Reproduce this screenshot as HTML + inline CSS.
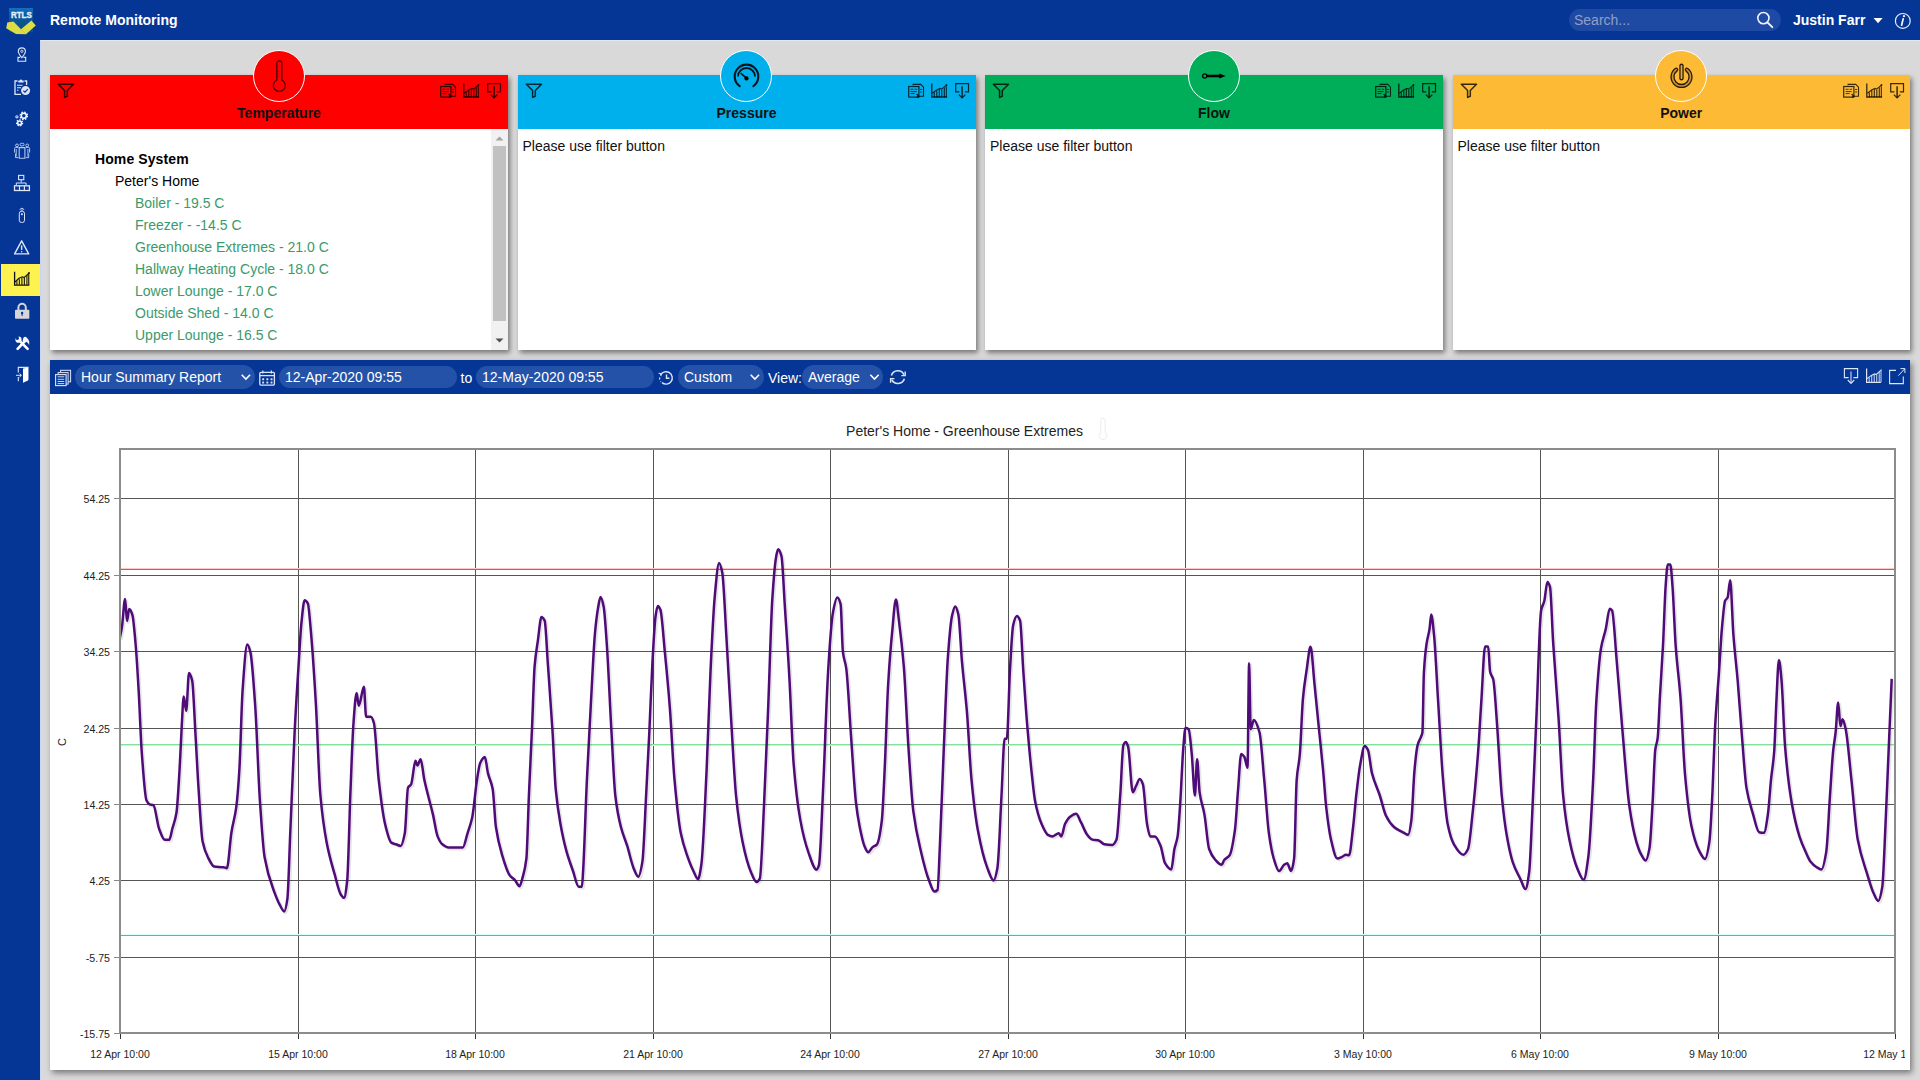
<!DOCTYPE html>
<html><head><meta charset="utf-8">
<style>
*{box-sizing:border-box;margin:0;padding:0}
html,body{width:1920px;height:1080px;overflow:hidden}
body{background:#d9d9d9;font-family:"Liberation Sans",sans-serif;font-size:14px;color:#000;position:relative}
.abs{position:absolute}
svg{overflow:visible}
#top{left:0;top:0;width:1920px;height:40px;background:#063695}
#side{left:0;top:0;width:40px;height:1080px;background:#063695}
#sideline{left:40px;top:40px;width:1px;height:1040px;background:#c9d6f2}
#topline{left:40px;top:40px;width:1880px;height:1px;background:#dfe6f4}
.title{left:50px;top:12px;color:#fff;font-weight:bold;font-size:14px;line-height:16px}
.search{left:1569px;top:9px;width:212px;height:22px;border-radius:11px;background:#1f4aa3}
.search span{position:absolute;left:5px;top:3px;color:#919fc6;font-size:14px;line-height:16px}
.user{left:1793px;top:12px;color:#fff;font-weight:bold;font-size:14px;line-height:16px}
.panel{top:75px;width:458px;height:275px;background:#fff;box-shadow:2px 3px 5px rgba(0,0,0,.45)}
.phead{position:absolute;left:0;top:0;width:100%;height:54px}
.pcirc{position:absolute;left:202.5px;top:-25px;width:52px;height:52px;border-radius:50%;border:1px solid #fff}
.ptitle{position:absolute;left:0;width:100%;top:30px;text-align:center;font-weight:bold;font-size:14px;line-height:16px;color:#111}
.pmsg{position:absolute;left:5px;top:63px;font-size:14px;line-height:16px;color:#111}
.hsvg{position:absolute;left:0;top:0}
.tree{position:absolute;left:0;top:54px;width:441px;height:221px}
.tree div{position:absolute;font-size:14px;line-height:16px;white-space:nowrap}
.tree .g{color:#3b9a6b}
.sb{position:absolute;left:441px;top:54px;width:17px;height:221px;background:#f1f1f1}
.sbt{position:absolute;left:2px;top:17px;width:13px;height:175px;background:#c1c1c1}
#chart{left:50px;top:360px;width:1860px;height:710px;background:#fff;box-shadow:2px 3px 6px rgba(0,0,0,.45)}
#tbar{position:absolute;left:0;top:0;width:1860px;height:34px;background:#063695}
.pill{position:absolute;top:6px;height:22px;border-radius:11px;background:#2352a8;color:#fff;font-size:14px;line-height:22px;padding-left:6px;white-space:nowrap}
.sel{top:5px;height:24px;line-height:24px;border-radius:12px}
.tl{position:absolute;top:10px;color:#fff;font-size:14px;line-height:16px;white-space:nowrap}
</style></head><body>
<div class="abs" id="top"></div>
<div class="abs" id="side"></div>
<div class="abs" id="sideline"></div>
<div class="abs" id="topline"></div>
<div class="abs" style="left:1px;top:264px;width:39px;height:32px;background:#fdf24f"></div>
<div class="abs title">Remote Monitoring</div>
<div class="abs search"><span>Search...</span></div>
<div class="abs user">Justin Farr</div>
<svg class="abs" style="left:0;top:0" width="1920" height="40">
<defs><linearGradient id="lg" x1="0" y1="0" x2="0" y2="1"><stop offset="0" stop-color="#1570bf"/><stop offset="0.3" stop-color="#0a5a9c"/><stop offset="1" stop-color="#0b4d82"/></linearGradient></defs>
<rect x="9" y="8" width="24" height="24.3" fill="url(#lg)"/>
<text x="10.9" y="17.8" font-family="Liberation Sans" font-weight="bold" font-size="9.6" fill="#e4f2ff" stroke="#e4f2ff" stroke-width="0.35" textLength="21" lengthAdjust="spacingAndGlyphs">RTLS</text>
<path d="M7.3 22.4 L13.4 21.6 L21 29.2 L31.4 20.4 L35.8 25.4 L26 34.2 L16 33.9 L6.2 28.2Z" fill="#dedc45"/>
<path d="M21 29.2 L26 34.2" stroke="#b9b630" stroke-width="0.8" opacity="0.6"/>
<circle cx="1763.4" cy="18.1" r="5.6" fill="none" stroke="#f0f4ff" stroke-width="1.6"/>
<path d="M1767.4 22.3 L1772.3 27.2" stroke="#f0f4ff" stroke-width="1.9" stroke-linecap="round"/>
<path d="M1873.5 18 H1882.6 L1878.05 23.3Z" fill="#fff"/>
<circle cx="1902.8" cy="20.9" r="7.4" fill="none" stroke="#e8eeff" stroke-width="1.2"/>
<circle cx="1904" cy="16.2" r="1.1" fill="#f4f7ff"/>
<path d="M1903.2 18.8 L1901.6 25.2" stroke="#f4f7ff" stroke-width="1.7" stroke-linecap="round"/>
</svg>
<svg class="abs" style="left:0;top:40" width="40" height="360" viewBox="0 40 40 360">
<path d="M21.85 57.6 C19.6 54.8 18.3 53 18.3 51.4 A3.55 3.55 0 0 1 25.4 51.4 C25.4 53 24.1 54.8 21.85 57.6Z" stroke="#dce6f8" fill="none" stroke-width="1.1"/>
<circle cx="21.85" cy="51.3" r="1.15" stroke="#dce6f8" fill="none" stroke-width="0.9"/>
<path d="M20.2 57.4 H18 V61.2 H25.7 V57.4 H23.5" stroke="#dce6f8" fill="none" stroke-width="1.1"/>
<path d="M17.5 81 H15 V94.3 H21" stroke="#dce6f8" fill="none" stroke-width="1.3"/>
<path d="M24.5 81 H26.6 V85" stroke="#dce6f8" fill="none" stroke-width="1.3"/>
<path d="M18.3 82.5 V80.6 H19.8 A1.2 1.2 0 0 1 22.2 80.6 H23.7 V82.5Z" fill="#dce6f8"/>
<path d="M17 85.3 H22.5 M17 87.8 H21 M17 90.3 H18.5" stroke="#dce6f8" stroke-width="1.1"/>
<circle cx="25.6" cy="90.6" r="4.5" fill="#dce6f8"/>
<path d="M23.4 90.7 L25 92.2 L27.8 89.2" stroke="#063695" stroke-width="1.2" fill="none"/>
<circle cx="23.8" cy="115.8" r="3.7" fill="none" stroke="#f4f7ff" stroke-width="1.3" stroke-dasharray="1.6 1.3"/>
<circle cx="23.8" cy="115.8" r="2.5" fill="none" stroke="#f4f7ff" stroke-width="1.5"/>
<circle cx="19.6" cy="122.9" r="3.05" fill="none" stroke="#f4f7ff" stroke-width="1.2" stroke-dasharray="1.4 1.34"/>
<circle cx="19.6" cy="122.9" r="1.9" fill="none" stroke="#f4f7ff" stroke-width="1.5"/>
<circle cx="16.9" cy="116.8" r="1.1" fill="none" stroke="#c8d8f8" stroke-width="1.1"/>
<rect x="20.1" y="143.3" width="3.9" height="2.6" rx="1.2" stroke="#b4c8f2" fill="none" stroke-width="1"/>
<path d="M19.2 147.6 H24.9 V158.3 H19.2Z" stroke="#b4c8f2" fill="none" stroke-width="1.1"/>
<circle cx="17" cy="145.4" r="1.4" stroke="#b4c8f2" fill="none" stroke-width="1"/>
<path d="M18.3 147.4 H15.6 Q14.6 147.4 14.6 148.5 V152.6 M15.5 153.5 V157.6 H18.3" stroke="#b4c8f2" fill="none" stroke-width="1"/><path d="M16.3 149 V156.5" stroke="#8ea8dc" stroke-width="1.2"/>
<circle cx="27.2" cy="145.4" r="1.4" stroke="#b4c8f2" fill="none" stroke-width="1"/>
<path d="M25.9 147.4 H28.6 Q29.6 147.4 29.6 148.5 V152.6 M28.7 153.5 V157.6 H25.9" stroke="#b4c8f2" fill="none" stroke-width="1"/><path d="M27.9 149 V156.5" stroke="#8ea8dc" stroke-width="1.2"/>
<rect x="18.6" y="175.4" width="5.2" height="4.3" stroke="#dce6f8" fill="none" stroke-width="1.1"/>
<path d="M21.2 179.7 V182.5 M16.3 185.3 V183 H26.1 V185.3" stroke="#dce6f8" fill="none" stroke-width="1"/>
<rect x="14.5" y="185.8" width="14.9" height="4.7" stroke="#dce6f8" fill="none" stroke-width="1.3"/>
<path d="M19.5 185.8 V190.5 M24.4 185.8 V190.5" stroke="#dce6f8" fill="none" stroke-width="1.2"/>
<path d="M19.6 209.6 Q21.9 206.8 24.2 209.6 M20.8 210.4 Q21.9 209.4 23 210.4" stroke="#dce6f8" fill="none" stroke-width="0.9"/>
<rect x="19.3" y="211.4" width="5.2" height="11" rx="2" stroke="#dce6f8" fill="none" stroke-width="1"/>
<rect x="21" y="213.3" width="1.8" height="1.8" fill="#dce6f8"/>
<path d="M21.65 240.8 L28.7 253.9 H14.6Z" stroke="#dce6f8" fill="none" stroke-width="1.4" stroke-linejoin="round"/>
<path d="M21.65 245.4 V250" stroke="#dce6f8" stroke-width="1.4"/><circle cx="21.65" cy="251.7" r="0.8" fill="#dce6f8"/>
<path d="M14.6 271.8 V285.1 H29.3" stroke="#111" stroke-width="1.3" fill="none"/>
<path d="M15 282 L19 278.3 L22.4 276.8 L24 277.6 L29 273.2" stroke="#111" stroke-width="1.2" fill="none"/><circle cx="29" cy="273" r="0.9" fill="#111"/>
<path d="M16.9 285 V281.2 M19.4 285 V279.2 M21.9 285 V277.6 M24.4 285 V277.2 M26.9 285 V275.2 M28.7 285 V273.8" stroke="#2a2a10" stroke-width="1.2"/>
<path d="M18.4 310 V307.5 A3.7 3.7 0 0 1 25.8 307.5 V310" stroke="#d4d6dc" stroke-width="2" fill="none"/>
<rect x="15" y="309.8" width="14.3" height="8.9" rx="0.8" fill="#d4d6dc"/>
<circle cx="22.1" cy="313" r="1.2" fill="#063695"/><path d="M22.1 313 V316" stroke="#063695" stroke-width="1"/>
<path d="M17.6 348.8 L24.2 341.8" stroke="#fff" stroke-width="2.6" stroke-linecap="round"/>
<path d="M27.6 348.8 L21.2 342.4" stroke="#fff" stroke-width="2.6" stroke-linecap="round"/>
<circle cx="18.5" cy="339.7" r="3.1" fill="#f2f6ff"/><circle cx="17.3" cy="338.2" r="1.7" fill="#063695"/><path d="M17.3 338.2 L14.8 335.6 L16.2 335 L18.8 336.2Z" fill="#063695"/>
<path d="M23.2 338.3 Q24.6 336 26.6 337.4 L28.4 339.5 Q29.8 341.7 29.1 345 Q27.9 342.3 26.3 341.8 L24.6 343.2 L22.6 341Z" fill="#f2f6ff"/>
<path d="M18.3 372.5 V367.4 H28 V380" stroke="#dce6f8" fill="none" stroke-width="1.1"/>
<path d="M18.3 377 V381.3" stroke="#dce6f8" fill="none" stroke-width="1.1"/>
<path d="M23 368.5 L28 367.4 V380.5 L23 382.7Z" fill="#fff"/>
<path d="M16 375.3 H21.2 M19.6 373.6 L21.4 375.3 L19.6 377" stroke="#dce6f8" stroke-width="1" fill="none"/>
</svg>

<!-- panels -->
<div class="abs panel" style="left:50px">
  <div class="phead" style="background:#fe0000"><div class="pcirc" style="background:#fe0000"></div><div class="ptitle">Temperature</div></div>
  <svg class="hsvg" width="458" height="54" viewBox="0 0 458 54">
<path d="M8.3 9.3 H23.5 L17.3 15.5 V21.3 L14.6 22.4 V15.5 Z" fill="none" stroke="rgba(0,0,0,0.78)" stroke-width="1.5" stroke-linejoin="round"/>
<g transform="translate(-0.9 0)">
<path d="M396 10.3 V9.4 H403.6 L406.4 12.2 V21.3 H401.5" fill="none" stroke="rgba(0,0,0,0.78)" stroke-width="1.1"/>
<rect x="391.6" y="11.5" width="10.2" height="10.6" fill="none" stroke="rgba(0,0,0,0.78)" stroke-width="1.2"/>
<path d="M393.5 14.3 H396.5 M397.5 14.3 H400 M393.5 16.6 H399.5 M393.5 18.6 H397.5 M403 14.5 H405 M403 17 H405" stroke="rgba(0,0,0,0.78)" stroke-width="0.9"/>
<path d="M399.5 19 L402 21.6 M401.5 21 L400 22.5" stroke="rgba(0,0,0,0.78)" stroke-width="1.3"/>
<path d="M414.7 8.6 V22 H430" fill="none" stroke="rgba(0,0,0,0.78)" stroke-width="1.3"/>
<path d="M415.3 18.3 L419.5 15 L423 13.4 L424.5 14.2 L429.3 10.2" fill="none" stroke="rgba(0,0,0,0.78)" stroke-width="1.1"/><circle cx="429.4" cy="10" r="0.9" fill="rgba(0,0,0,0.78)"/>
<path d="M417.2 22 V17.4 M419.7 22 V15.4 M422.2 22 V14.2 M424.7 22 V14.8 M427.2 22 V12.6 M429.2 22 V11.2" stroke="rgba(0,0,0,0.78)" stroke-width="1.1"/>
<path d="M442.3 16.8 H438.6 V8.6 H451.4 V16.8 H447.7" fill="none" stroke="rgba(0,0,0,0.78)" stroke-width="1.2"/>
<path d="M445 11.3 V22.6" stroke="rgba(0,0,0,0.78)" stroke-width="1.5"/><path d="M441.8 19.6 L445 22.9 L448.2 19.6" fill="none" stroke="rgba(0,0,0,0.78)" stroke-width="1.3"/>
</g>
<path d="M226.8 5 V-11.7 A2.5 2.5 0 0 1 231.8 -11.7 V5 A6 6 0 1 1 226.8 5 Z" fill="none" stroke="rgba(0,0,0,0.7)" stroke-width="1.3"/>
<path d="M227 -1 H228.5 M227 1.5 H228.5 M227 -3.5 H228.5" stroke="rgba(0,0,0,0.5)" stroke-width="0.6"/>
</svg>
  <div class="tree">
    <div style="left:45px;top:22px;font-weight:bold;letter-spacing:0.1px">Home System</div>
    <div style="left:65px;top:44px">Peter's Home</div>
    <div class="g" style="left:85px;top:66px">Boiler - 19.5 C</div>
    <div class="g" style="left:85px;top:88px">Freezer - -14.5 C</div>
    <div class="g" style="left:85px;top:110px">Greenhouse Extremes - 21.0 C</div>
    <div class="g" style="left:85px;top:132px">Hallway Heating Cycle - 18.0 C</div>
    <div class="g" style="left:85px;top:154px">Lower Lounge - 17.0 C</div>
    <div class="g" style="left:85px;top:176px">Outside Shed - 14.0 C</div>
    <div class="g" style="left:85px;top:198px">Upper Lounge - 16.5 C</div>
  </div>
  <div class="sb"><div class="sbt"></div>
    <svg class="abs" style="left:0;top:0" width="17" height="221"><path d="M4.5 11.5 L8.5 7.5 L12.5 11.5Z" fill="#a3a3a3"/><path d="M4.5 209.5 L8.5 213.5 L12.5 209.5Z" fill="#505050"/></svg>
  </div>
</div>
<div class="abs panel" style="left:517.5px">
  <div class="phead" style="background:#00b0ec"><div class="pcirc" style="background:#00b0ec"></div><div class="ptitle">Pressure</div></div>
  <svg class="hsvg" width="458" height="54" viewBox="0 0 458 54">
<path d="M8.3 9.3 H23.5 L17.3 15.5 V21.3 L14.6 22.4 V15.5 Z" fill="none" stroke="rgba(0,0,0,0.78)" stroke-width="1.5" stroke-linejoin="round"/>
<g transform="translate(-0.9 0)">
<path d="M396 10.3 V9.4 H403.6 L406.4 12.2 V21.3 H401.5" fill="none" stroke="rgba(0,0,0,0.78)" stroke-width="1.1"/>
<rect x="391.6" y="11.5" width="10.2" height="10.6" fill="none" stroke="rgba(0,0,0,0.78)" stroke-width="1.2"/>
<path d="M393.5 14.3 H396.5 M397.5 14.3 H400 M393.5 16.6 H399.5 M393.5 18.6 H397.5 M403 14.5 H405 M403 17 H405" stroke="rgba(0,0,0,0.78)" stroke-width="0.9"/>
<path d="M399.5 19 L402 21.6 M401.5 21 L400 22.5" stroke="rgba(0,0,0,0.78)" stroke-width="1.3"/>
<path d="M414.7 8.6 V22 H430" fill="none" stroke="rgba(0,0,0,0.78)" stroke-width="1.3"/>
<path d="M415.3 18.3 L419.5 15 L423 13.4 L424.5 14.2 L429.3 10.2" fill="none" stroke="rgba(0,0,0,0.78)" stroke-width="1.1"/><circle cx="429.4" cy="10" r="0.9" fill="rgba(0,0,0,0.78)"/>
<path d="M417.2 22 V17.4 M419.7 22 V15.4 M422.2 22 V14.2 M424.7 22 V14.8 M427.2 22 V12.6 M429.2 22 V11.2" stroke="rgba(0,0,0,0.78)" stroke-width="1.1"/>
<path d="M442.3 16.8 H438.6 V8.6 H451.4 V16.8 H447.7" fill="none" stroke="rgba(0,0,0,0.78)" stroke-width="1.2"/>
<path d="M445 11.3 V22.6" stroke="rgba(0,0,0,0.78)" stroke-width="1.5"/><path d="M441.8 19.6 L445 22.9 L448.2 19.6" fill="none" stroke="rgba(0,0,0,0.78)" stroke-width="1.3"/>
</g>
<path d="M221.7 11.1 A11.8 11.8 0 1 1 235.3 11.1" fill="none" stroke="#03141c" stroke-width="2.1" stroke-linecap="round"/>
<path d="M220 1.5 A8.5 8.5 0 0 1 237 1.5" fill="none" stroke="#03141c" stroke-width="1.8"/>
<path d="M223.2 -1.4 L228.5 3.2" stroke="#03141c" stroke-width="1.6" stroke-linecap="round"/><circle cx="228.5" cy="3.4" r="2.1" fill="#000"/>
</svg>
  <div class="pmsg">Please use filter button</div>
</div>
<div class="abs panel" style="left:985px">
  <div class="phead" style="background:#00ae5a"><div class="pcirc" style="background:#00ae5a"></div><div class="ptitle">Flow</div></div>
  <svg class="hsvg" width="458" height="54" viewBox="0 0 458 54">
<path d="M8.3 9.3 H23.5 L17.3 15.5 V21.3 L14.6 22.4 V15.5 Z" fill="none" stroke="rgba(0,0,0,0.78)" stroke-width="1.5" stroke-linejoin="round"/>
<g transform="translate(-0.9 0)">
<path d="M396 10.3 V9.4 H403.6 L406.4 12.2 V21.3 H401.5" fill="none" stroke="rgba(0,0,0,0.78)" stroke-width="1.1"/>
<rect x="391.6" y="11.5" width="10.2" height="10.6" fill="none" stroke="rgba(0,0,0,0.78)" stroke-width="1.2"/>
<path d="M393.5 14.3 H396.5 M397.5 14.3 H400 M393.5 16.6 H399.5 M393.5 18.6 H397.5 M403 14.5 H405 M403 17 H405" stroke="rgba(0,0,0,0.78)" stroke-width="0.9"/>
<path d="M399.5 19 L402 21.6 M401.5 21 L400 22.5" stroke="rgba(0,0,0,0.78)" stroke-width="1.3"/>
<path d="M414.7 8.6 V22 H430" fill="none" stroke="rgba(0,0,0,0.78)" stroke-width="1.3"/>
<path d="M415.3 18.3 L419.5 15 L423 13.4 L424.5 14.2 L429.3 10.2" fill="none" stroke="rgba(0,0,0,0.78)" stroke-width="1.1"/><circle cx="429.4" cy="10" r="0.9" fill="rgba(0,0,0,0.78)"/>
<path d="M417.2 22 V17.4 M419.7 22 V15.4 M422.2 22 V14.2 M424.7 22 V14.8 M427.2 22 V12.6 M429.2 22 V11.2" stroke="rgba(0,0,0,0.78)" stroke-width="1.1"/>
<path d="M442.3 16.8 H438.6 V8.6 H451.4 V16.8 H447.7" fill="none" stroke="rgba(0,0,0,0.78)" stroke-width="1.2"/>
<path d="M445 11.3 V22.6" stroke="rgba(0,0,0,0.78)" stroke-width="1.5"/><path d="M441.8 19.6 L445 22.9 L448.2 19.6" fill="none" stroke="rgba(0,0,0,0.78)" stroke-width="1.3"/>
</g>
<circle cx="219.7" cy="1" r="2.1" fill="none" stroke="#000" stroke-width="1.3"/>
<path d="M221.8 1 H235" stroke="#000" stroke-width="2.6"/>
<path d="M234.3 -1.6 L240.7 1 L234.3 3.6Z" fill="#000"/>
</svg>
  <div class="pmsg">Please use filter button</div>
</div>
<div class="abs panel" style="left:1452.5px;width:457.5px">
  <div class="phead" style="background:#fdbb35"><div class="pcirc" style="background:#fdbb35"></div><div class="ptitle">Power</div></div>
  <svg class="hsvg" width="458" height="54" viewBox="0 0 458 54">
<path d="M8.3 9.3 H23.5 L17.3 15.5 V21.3 L14.6 22.4 V15.5 Z" fill="none" stroke="rgba(0,0,0,0.78)" stroke-width="1.5" stroke-linejoin="round"/>
<g transform="translate(-0.9 0)">
<path d="M396 10.3 V9.4 H403.6 L406.4 12.2 V21.3 H401.5" fill="none" stroke="rgba(0,0,0,0.78)" stroke-width="1.1"/>
<rect x="391.6" y="11.5" width="10.2" height="10.6" fill="none" stroke="rgba(0,0,0,0.78)" stroke-width="1.2"/>
<path d="M393.5 14.3 H396.5 M397.5 14.3 H400 M393.5 16.6 H399.5 M393.5 18.6 H397.5 M403 14.5 H405 M403 17 H405" stroke="rgba(0,0,0,0.78)" stroke-width="0.9"/>
<path d="M399.5 19 L402 21.6 M401.5 21 L400 22.5" stroke="rgba(0,0,0,0.78)" stroke-width="1.3"/>
<path d="M414.7 8.6 V22 H430" fill="none" stroke="rgba(0,0,0,0.78)" stroke-width="1.3"/>
<path d="M415.3 18.3 L419.5 15 L423 13.4 L424.5 14.2 L429.3 10.2" fill="none" stroke="rgba(0,0,0,0.78)" stroke-width="1.1"/><circle cx="429.4" cy="10" r="0.9" fill="rgba(0,0,0,0.78)"/>
<path d="M417.2 22 V17.4 M419.7 22 V15.4 M422.2 22 V14.2 M424.7 22 V14.8 M427.2 22 V12.6 M429.2 22 V11.2" stroke="rgba(0,0,0,0.78)" stroke-width="1.1"/>
<path d="M442.3 16.8 H438.6 V8.6 H451.4 V16.8 H447.7" fill="none" stroke="rgba(0,0,0,0.78)" stroke-width="1.2"/>
<path d="M445 11.3 V22.6" stroke="rgba(0,0,0,0.78)" stroke-width="1.5"/><path d="M441.8 19.6 L445 22.9 L448.2 19.6" fill="none" stroke="rgba(0,0,0,0.78)" stroke-width="1.3"/>
</g>
<path d="M223.2 -5.3 A9 9 0 1 0 233.8 -5.3" fill="none" stroke="#2a1a08" stroke-width="4.2" stroke-linecap="round"/>
<path d="M223.2 -5.3 A9 9 0 1 0 233.8 -5.3" fill="none" stroke="#c8943a" stroke-width="1.6" stroke-linecap="round"/>
<path d="M228.5 -9.2 V3.2" stroke="#2a1a08" stroke-width="4.4" stroke-linecap="round"/>
<path d="M228.5 -9.2 V3.2" stroke="#e6aa3a" stroke-width="1.8" stroke-linecap="round"/>
</svg>
  <div class="pmsg">Please use filter button</div>
</div>

<!-- chart -->
<div class="abs" style="left:50px;top:359px;width:1860px;height:1px;background:#cfdaf2"></div>
<div class="abs" id="chart">
  <div id="tbar">
    <div class="pill sel" style="left:25px;width:180px">Hour Summary Report</div>
    <div class="pill" style="left:229px;width:178px">12-Apr-2020 09:55</div>
    <div class="tl" style="left:410.5px">to</div>
    <div class="pill" style="left:426px;width:178px">12-May-2020 09:55</div>
    <div class="pill sel" style="left:628px;width:86px">Custom</div>
    <div class="tl" style="left:718px">View:</div>
    <div class="pill sel" style="left:752px;width:81px">Average</div>
    <svg class="abs" style="left:0;top:0" width="1860" height="34" viewBox="0 0 1860 34">
<rect x="10.6" y="10.3" width="10" height="11.5" fill="none" stroke="#dce6f8" stroke-width="1"/>
<rect x="8.1" y="12.6" width="10" height="11.5" fill="#063695" stroke="#dce6f8" stroke-width="1"/>
<rect x="5.6" y="14.6" width="10.5" height="11" fill="#063695" stroke="#dce6f8" stroke-width="1.1"/>
<path d="M7.6 16.8 H14.2 M7.6 19.3 H14.2 M7.6 21.5 H14.2 M7.6 23.6 H14.2" stroke="#dce6f8" stroke-width="0.9"/>
<path d="M191.70000000000002 14.8 L195.9 19 L200.1 14.8" fill="none" stroke="#fff" stroke-width="1.6"/>
<path d="M700.6999999999999 14.8 L704.9 19 L709.1 14.8" fill="none" stroke="#fff" stroke-width="1.6"/>
<path d="M820.3 14.8 L824.5 19 L828.7 14.8" fill="none" stroke="#fff" stroke-width="1.6"/>
<rect x="209.8" y="12.3" width="14.6" height="12.8" rx="1" fill="none" stroke="#dce6f8" stroke-width="1.3"/>
<path d="M209.8 15.6 H224.4" stroke="#dce6f8" stroke-width="1.3"/><path d="M212.8 10.6 V13.4 M221.4 10.6 V13.4" stroke="#dce6f8" stroke-width="1.2"/>
<rect x="212.2" y="18.3" width="1.9" height="1.9" fill="#dce6f8"/>
<rect x="216.4" y="18.3" width="1.9" height="1.9" fill="#dce6f8"/>
<rect x="220.6" y="18.3" width="1.9" height="1.9" fill="#dce6f8"/>
<rect x="212.2" y="21.6" width="1.9" height="1.9" fill="#dce6f8"/>
<rect x="216.4" y="21.6" width="1.9" height="1.9" fill="#dce6f8"/>
<rect x="220.6" y="21.6" width="1.9" height="1.9" fill="#dce6f8"/>
<path d="M610.6 15 A6.2 6.2 0 1 1 612 22.6" fill="none" stroke="#dce6f8" stroke-width="1.4"/>
<path d="M609.6 17.6 V19.5 M610.6 21.4 L611 21.9" stroke="#dce6f8" stroke-width="1.2"/>
<path d="M616.5 14.5 V18.3 H619.4" fill="none" stroke="#dce6f8" stroke-width="1.4"/>
<path d="M608.6 13.2 L611.2 13.6 L610.8 16.2" fill="none" stroke="#dce6f8" stroke-width="1.1"/>
<path d="M841.4 15.4 A6.8 6.8 0 0 1 854 14.6" fill="none" stroke="#dce6f8" stroke-width="1.6"/>
<path d="M854.4 18.8 A6.8 6.8 0 0 1 841.8 19.6" fill="none" stroke="#dce6f8" stroke-width="1.6"/>
<path d="M855.2 11.4 V15.6 H851.4" fill="none" stroke="#dce6f8" stroke-width="1.4"/>
<path d="M840.6 22.8 V18.6 H844.4" fill="none" stroke="#dce6f8" stroke-width="1.4"/>
<path d="M1798.6 17.6 H1794.4 V8.6 H1807.6 V17.6 H1803.4" fill="none" stroke="#dce6f8" stroke-width="1.1"/>
<path d="M1801 11.5 V23" stroke="#8fa8dc" stroke-width="1.6"/><path d="M1797.8 20 L1801 23.4 L1804.2 20" fill="none" stroke="#dce6f8" stroke-width="1.1"/>
<path d="M1816.6 8.6 V22.3 H1830.9" fill="none" stroke="#dce6f8" stroke-width="1.2"/>
<path d="M1817 18.6 L1821.4 15.4 L1824.6 13.9 L1826 14.6 L1831.6 9.6" fill="none" stroke="#dce6f8" stroke-width="1.1"/>
<path d="M1819.2 22.3 V17.4 M1821.7 22.3 V15.8 M1824.2 22.3 V14.4 M1826.7 22.3 V14.2 M1829.2 22.3 V11.8 M1831 22.3 V10.4" stroke="#b8caf0" stroke-width="1.1"/>
<path d="M1846 10.4 H1839.6 V23.6 H1853.3 V16.6" fill="none" stroke="#dce6f8" stroke-width="1.1"/>
<path d="M1848.4 15.6 L1854.7 8.9 M1850.5 8.6 H1854.9 V13" fill="none" stroke="#dce6f8" stroke-width="1"/>
</svg>
  </div>
</div>
<svg class="abs" style="left:0;top:0" width="1920" height="1080" viewBox="0 0 1920 1080">
<defs><clipPath id="cp"><rect x="121" y="450" width="1773" height="582"/></clipPath><clipPath id="xc"><rect x="0" y="1040" width="1905" height="30"/></clipPath></defs>
<text x="964.5" y="435.7" text-anchor="middle" font-family="Liberation Sans" font-size="14" fill="#222">Peter's Home - Greenhouse Extremes</text>
<path d="M1100.8 420.5 a2.2 2.2 0 0 1 4.4 0 v12 a3.8 3.8 0 1 1 -4.4 0z" fill="none" stroke="#ececec" stroke-width="1"/>
<text x="0" y="0" transform="translate(65.5 742) rotate(-90)" text-anchor="middle" font-family="Liberation Sans" font-size="11" fill="#222">C</text>
<rect x="121" y="498" width="1773" height="1" fill="#555"/>
<rect x="121" y="575" width="1773" height="1" fill="#555"/>
<rect x="121" y="651" width="1773" height="1" fill="#555"/>
<rect x="121" y="728" width="1773" height="1" fill="#555"/>
<rect x="121" y="804" width="1773" height="1" fill="#555"/>
<rect x="121" y="880" width="1773" height="1" fill="#555"/>
<rect x="121" y="957" width="1773" height="1" fill="#555"/>
<rect x="298" y="450" width="1" height="582" fill="#555"/>
<rect x="475" y="450" width="1" height="582" fill="#555"/>
<rect x="653" y="450" width="1" height="582" fill="#555"/>
<rect x="830" y="450" width="1" height="582" fill="#555"/>
<rect x="1008" y="450" width="1" height="582" fill="#555"/>
<rect x="1185" y="450" width="1" height="582" fill="#555"/>
<rect x="1363" y="450" width="1" height="582" fill="#555"/>
<rect x="1540" y="450" width="1" height="582" fill="#555"/>
<rect x="1718" y="450" width="1" height="582" fill="#555"/>
<rect x="121" y="568" width="1773" height="1" fill="#ffc6c6"/><rect x="121" y="569" width="1773" height="1" fill="#c05e60"/>
<rect x="121" y="744" width="1773" height="1" fill="#82e19c"/><rect x="121" y="745" width="1773" height="1" fill="#b6ffc8"/>
<rect x="121" y="934" width="1773" height="1" fill="#dcffff"/><rect x="121" y="935" width="1773" height="1" fill="#6aa9ba"/>
<rect x="114" y="498" width="5" height="1" fill="#888"/>
<rect x="114" y="575" width="5" height="1" fill="#888"/>
<rect x="114" y="651" width="5" height="1" fill="#888"/>
<rect x="114" y="728" width="5" height="1" fill="#888"/>
<rect x="114" y="804" width="5" height="1" fill="#888"/>
<rect x="114" y="880" width="5" height="1" fill="#888"/>
<rect x="114" y="957" width="5" height="1" fill="#888"/>
<rect x="114" y="1033" width="5" height="1" fill="#888"/>
<rect x="120" y="1034" width="1" height="5" fill="#333"/>
<rect x="298" y="1034" width="1" height="5" fill="#333"/>
<rect x="475" y="1034" width="1" height="5" fill="#333"/>
<rect x="653" y="1034" width="1" height="5" fill="#333"/>
<rect x="830" y="1034" width="1" height="5" fill="#333"/>
<rect x="1008" y="1034" width="1" height="5" fill="#333"/>
<rect x="1185" y="1034" width="1" height="5" fill="#333"/>
<rect x="1363" y="1034" width="1" height="5" fill="#333"/>
<rect x="1540" y="1034" width="1" height="5" fill="#333"/>
<rect x="1718" y="1034" width="1" height="5" fill="#333"/>
<rect x="1895" y="1034" width="1" height="5" fill="#333"/>
<rect x="120" y="449" width="1775" height="584" fill="none" stroke="#8c8c8c" stroke-width="2"/>
<text x="110" y="503" text-anchor="end" font-family="Liberation Sans" font-size="10.6" fill="#222">54.25</text>
<text x="110" y="580" text-anchor="end" font-family="Liberation Sans" font-size="10.6" fill="#222">44.25</text>
<text x="110" y="656" text-anchor="end" font-family="Liberation Sans" font-size="10.6" fill="#222">34.25</text>
<text x="110" y="733" text-anchor="end" font-family="Liberation Sans" font-size="10.6" fill="#222">24.25</text>
<text x="110" y="809" text-anchor="end" font-family="Liberation Sans" font-size="10.6" fill="#222">14.25</text>
<text x="110" y="885" text-anchor="end" font-family="Liberation Sans" font-size="10.6" fill="#222">4.25</text>
<text x="110" y="962" text-anchor="end" font-family="Liberation Sans" font-size="10.6" fill="#222">-5.75</text>
<text x="110" y="1038" text-anchor="end" font-family="Liberation Sans" font-size="10.6" fill="#222">-15.75</text>
<g clip-path="url(#xc)">
<text x="120" y="1058" text-anchor="middle" font-family="Liberation Sans" font-size="10.5" fill="#222">12 Apr 10:00</text>
<text x="298" y="1058" text-anchor="middle" font-family="Liberation Sans" font-size="10.5" fill="#222">15 Apr 10:00</text>
<text x="475" y="1058" text-anchor="middle" font-family="Liberation Sans" font-size="10.5" fill="#222">18 Apr 10:00</text>
<text x="653" y="1058" text-anchor="middle" font-family="Liberation Sans" font-size="10.5" fill="#222">21 Apr 10:00</text>
<text x="830" y="1058" text-anchor="middle" font-family="Liberation Sans" font-size="10.5" fill="#222">24 Apr 10:00</text>
<text x="1008" y="1058" text-anchor="middle" font-family="Liberation Sans" font-size="10.5" fill="#222">27 Apr 10:00</text>
<text x="1185" y="1058" text-anchor="middle" font-family="Liberation Sans" font-size="10.5" fill="#222">30 Apr 10:00</text>
<text x="1363" y="1058" text-anchor="middle" font-family="Liberation Sans" font-size="10.5" fill="#222">3 May 10:00</text>
<text x="1540" y="1058" text-anchor="middle" font-family="Liberation Sans" font-size="10.5" fill="#222">6 May 10:00</text>
<text x="1718" y="1058" text-anchor="middle" font-family="Liberation Sans" font-size="10.5" fill="#222">9 May 10:00</text>
<text x="1895" y="1058" text-anchor="middle" font-family="Liberation Sans" font-size="10.5" fill="#222">12 May 10:00</text>
</g>
<g clip-path="url(#cp)">
<path d="M119.7 638.3 C120.4 634.6 121.2 631.8 121.9 627.2 C123.0 620.5 124.0 598.9 125.1 598.9 C125.7 598.9 126.4 621.0 127.0 621.0 C127.7 621.0 128.5 609.0 129.2 609.0 C130.2 609.0 131.3 611.5 132.3 614.6 C133.4 617.8 134.4 631.0 135.5 643.0 C136.5 654.6 137.6 672.3 138.6 690.0 C139.7 708.3 140.7 738.5 141.8 753.0 C143.4 774.4 144.9 797.2 146.5 800.5 C147.5 802.6 148.6 803.9 149.6 804.3 C150.9 804.8 152.1 804.7 153.4 805.2 C155.3 806.0 157.2 823.8 159.1 828.8 C161.0 833.8 162.9 839.8 164.8 839.8 C166.3 839.8 167.7 839.8 169.2 839.8 C170.2 839.8 171.3 832.6 172.3 828.8 C173.7 823.8 175.0 821.4 176.4 813.0 C177.5 806.4 178.5 786.6 179.6 769.0 C180.3 756.9 181.1 737.4 181.8 724.9 C182.4 714.1 183.1 696.5 183.7 696.5 C184.5 696.5 185.4 710.7 186.2 710.7 C187.1 710.7 188.1 672.9 189.0 672.9 C190.1 672.9 191.1 676.2 192.2 680.8 C193.2 685.2 194.3 713.7 195.3 731.2 C196.4 749.3 197.4 771.8 198.5 787.9 C199.9 808.6 201.2 834.6 202.6 841.4 C204.4 850.2 206.1 853.7 207.9 857.2 C210.0 861.4 212.1 866.3 214.2 866.6 C217.4 867.0 220.5 866.8 223.7 867.2 C224.7 867.3 225.8 868.2 226.8 868.2 C228.4 868.2 229.9 841.8 231.5 832.0 C233.1 822.0 234.7 818.9 236.3 806.8 C237.3 799.0 238.4 785.8 239.4 769.0 C240.5 751.6 241.5 705.5 242.6 690.2 C244.2 667.8 245.7 644.6 247.3 644.6 C248.3 644.6 249.4 648.3 250.4 652.4 C252.0 658.7 253.6 683.0 255.2 706.0 C256.8 728.5 258.3 776.9 259.9 800.5 C261.5 824.1 263.0 848.0 264.6 857.2 C268.0 877.0 271.3 883.8 274.7 893.1 C276.3 897.4 277.8 901.2 279.4 904.1 C281.0 907.1 282.6 911.4 284.2 911.4 C285.2 911.4 286.3 906.2 287.3 899.4 C288.4 892.4 289.4 851.3 290.5 827.0 C291.9 795.8 293.2 759.2 294.6 732.5 C295.8 708.4 297.1 689.0 298.3 669.5 C299.4 652.6 300.4 632.4 301.5 622.2 C302.5 612.3 303.6 600.2 304.6 600.2 C305.7 600.2 306.7 601.4 307.8 603.3 C308.8 605.1 309.9 620.3 310.9 631.7 C312.5 649.4 314.1 674.1 315.7 701.0 C317.3 727.3 318.8 778.0 320.4 795.5 C322.5 818.9 324.6 831.6 326.7 842.7 C329.3 856.6 332.0 864.8 334.6 874.2 C336.7 881.7 338.8 891.7 340.9 894.7 C341.9 896.2 343.0 897.8 344.0 897.8 C345.1 897.8 346.1 890.2 347.2 880.5 C348.2 871.1 349.3 821.2 350.3 795.5 C351.4 769.0 352.4 737.4 353.5 723.0 C354.5 709.0 355.6 693.1 356.6 693.1 C357.3 693.1 358.1 705.7 358.8 705.7 C360.5 705.7 362.2 686.8 363.9 686.8 C364.6 686.8 365.4 716.7 366.1 716.7 C367.7 716.7 369.2 716.7 370.8 716.7 C371.8 716.7 372.9 719.6 373.9 723.0 C375.5 728.3 377.1 765.5 378.7 779.7 C380.8 798.4 382.9 815.0 385.0 823.8 C387.1 832.6 389.2 841.5 391.3 842.7 C392.9 843.6 394.4 843.8 396.0 844.3 C397.6 844.8 399.1 845.9 400.7 845.9 C402.1 845.9 403.4 840.4 404.8 833.3 C405.9 827.8 406.9 789.6 408.0 787.6 C409.0 785.6 410.1 786.1 411.1 784.4 C412.6 782.0 414.0 760.8 415.5 760.8 C416.1 760.8 416.8 765.6 417.4 765.6 C418.5 765.6 419.5 759.3 420.6 759.3 C421.8 759.3 423.1 773.8 424.3 779.7 C425.6 785.7 426.8 790.4 428.1 795.5 C429.7 802.0 431.3 807.6 432.9 814.4 C434.5 821.1 436.0 832.5 437.6 836.4 C439.2 840.3 440.7 843.1 442.3 844.3 C444.4 845.9 446.5 847.4 448.6 847.4 C453.3 847.4 458.1 847.4 462.8 847.4 C464.4 847.4 465.9 838.3 467.5 833.3 C469.1 828.3 470.6 824.9 472.2 817.5 C473.8 810.0 475.4 789.7 477.0 779.7 C478.0 773.3 479.1 765.6 480.1 763.3 C481.7 759.8 483.2 757.0 484.8 757.0 C485.9 757.0 486.9 769.0 488.0 773.4 C489.6 779.8 491.1 780.7 492.7 789.2 C493.8 795.0 494.8 819.7 495.9 827.0 C498.0 841.4 500.1 848.3 502.2 855.3 C504.8 864.0 507.4 872.6 510.0 875.8 C511.6 877.8 513.2 878.2 514.8 879.9 C516.4 881.5 517.9 886.2 519.5 886.2 C520.5 886.2 521.6 881.1 522.6 877.4 C523.9 872.9 525.1 869.5 526.4 858.5 C527.2 851.2 528.1 815.0 528.9 795.5 C530.0 770.6 531.0 750.5 532.1 726.2 C532.9 707.2 533.8 676.4 534.6 666.3 C535.7 653.4 536.7 648.7 537.8 641.1 C539.0 632.3 540.3 616.9 541.5 616.9 C542.6 616.9 543.6 618.4 544.7 620.7 C545.7 623.0 546.8 648.7 547.8 663.2 C549.4 685.7 551.0 706.5 552.6 732.5 C553.6 749.3 554.7 778.0 555.7 789.2 C557.3 806.1 558.8 814.9 560.4 823.8 C562.5 835.7 564.6 844.7 566.7 852.2 C568.8 859.7 570.9 865.0 573.0 871.0 C574.9 876.5 576.8 886.8 578.7 886.8 C579.8 886.8 580.8 886.8 581.9 886.8 C582.3 886.8 582.7 877.5 583.1 871.0 C584.4 850.5 585.6 806.8 586.9 779.7 C588.3 750.5 589.6 725.6 591.0 701.0 C592.4 676.4 593.7 646.2 595.1 631.7 C596.2 620.4 597.2 612.3 598.3 606.5 C599.0 602.5 599.8 597.0 600.5 597.0 C601.5 597.0 602.6 601.5 603.6 606.5 C604.7 611.7 605.7 629.1 606.8 644.3 C608.4 666.7 609.9 705.0 611.5 732.5 C612.8 754.8 614.0 784.5 615.3 795.5 C617.2 811.7 619.0 819.7 620.9 827.0 C623.0 835.3 625.1 839.1 627.2 845.9 C629.3 852.7 631.4 862.9 633.5 867.9 C635.1 871.7 636.7 876.7 638.3 876.7 C639.7 876.7 641.0 870.0 642.4 861.6 C643.6 854.0 644.9 818.6 646.1 795.5 C647.2 775.5 648.2 754.8 649.3 732.5 C650.3 710.9 651.4 681.6 652.4 663.2 C653.5 644.2 654.5 623.2 655.6 616.0 C656.3 611.0 657.1 605.9 657.8 605.9 C658.6 605.9 659.5 607.6 660.3 609.6 C661.9 613.3 663.4 637.7 665.0 653.7 C666.6 670.0 668.2 686.6 669.8 707.3 C671.4 727.6 672.9 762.3 674.5 779.7 C676.6 803.0 678.7 822.9 680.8 833.3 C682.9 843.7 685.0 849.2 687.1 855.3 C689.2 861.4 691.3 866.8 693.4 871.0 C695.0 874.1 696.5 879.0 698.1 879.0 C699.2 879.0 700.2 872.0 701.3 864.8 C703.1 852.8 704.8 807.4 706.6 770.1 C707.9 742.6 709.2 698.5 710.5 671.5 C711.9 641.7 713.4 611.2 714.8 595.9 C716.2 580.6 717.7 563.0 719.1 563.0 C720.2 563.0 721.2 567.5 722.3 572.9 C723.6 579.6 725.0 613.4 726.3 635.3 C727.9 662.2 729.6 694.1 731.2 720.8 C732.8 747.5 734.5 780.4 736.1 796.4 C738.3 817.9 740.5 831.8 742.7 842.4 C745.4 855.6 748.2 865.6 750.9 872.0 C752.8 876.3 754.6 881.9 756.5 881.9 C757.6 881.9 758.7 880.6 759.8 878.6 C761.2 876.0 762.7 831.8 764.1 803.0 C765.5 774.8 766.9 739.1 768.3 704.4 C769.6 671.3 771.0 619.8 772.3 599.2 C773.6 579.1 774.9 563.1 776.2 556.4 C776.9 553.0 777.5 549.2 778.2 549.2 C779.3 549.2 780.4 552.2 781.5 556.4 C782.6 560.6 783.7 588.9 784.8 605.7 C786.3 629.2 787.9 650.8 789.4 678.1 C790.8 703.0 792.2 746.2 793.6 763.5 C795.8 790.6 798.0 807.3 800.2 819.4 C802.9 834.5 805.7 844.7 808.4 852.3 C811.1 859.9 813.9 869.7 816.6 869.7 C817.4 869.7 818.1 867.8 818.9 865.4 C820.3 860.9 821.8 815.9 823.2 786.5 C824.8 752.9 826.5 697.6 828.1 671.5 C829.7 645.4 831.4 620.9 833.0 612.3 C834.4 604.7 835.9 597.5 837.3 597.5 C838.4 597.5 839.5 599.9 840.6 604.1 C841.4 607.0 842.1 645.4 842.9 651.8 C844.0 661.0 845.1 660.4 846.2 668.2 C847.8 679.8 849.5 714.7 851.1 737.2 C852.7 759.7 854.4 788.9 856.0 803.0 C857.2 813.6 858.5 820.8 859.7 827.0 C861.3 834.9 862.8 842.3 864.4 845.9 C865.7 848.8 866.9 852.2 868.2 852.2 C869.6 852.2 870.9 848.6 872.3 847.4 C873.9 846.1 875.4 846.1 877.0 844.3 C878.6 842.4 880.2 833.6 881.8 820.7 C882.8 812.3 883.9 785.7 884.9 764.0 C886.0 741.6 887.0 703.6 888.1 685.2 C889.5 661.6 890.8 645.9 892.2 631.7 C893.4 618.9 894.7 599.6 895.9 599.6 C897.0 599.6 898.0 613.7 899.1 622.2 C900.7 634.7 902.2 647.2 903.8 666.3 C905.4 685.4 906.9 724.7 908.5 748.2 C910.1 772.2 911.7 798.8 913.3 811.2 C915.9 831.4 918.5 841.1 921.1 852.2 C923.7 863.4 926.4 873.8 929.0 880.5 C930.8 885.1 932.6 891.5 934.4 891.5 C935.4 891.5 936.5 891.0 937.5 890.0 C938.3 889.2 939.2 860.4 940.0 842.7 C941.3 815.7 942.5 778.0 943.8 748.2 C945.2 716.1 946.5 675.8 947.9 656.9 C949.3 638.0 950.6 622.0 952.0 615.9 C953.1 611.2 954.1 606.5 955.2 606.5 C956.2 606.5 957.3 610.1 958.3 614.4 C959.6 619.7 960.8 648.9 962.1 663.2 C963.7 680.9 965.2 691.7 966.8 710.4 C968.4 729.1 969.9 763.2 971.5 779.7 C973.6 801.8 975.7 818.7 977.8 830.1 C981.0 847.3 984.1 859.7 987.3 867.9 C989.4 873.4 991.5 880.5 993.6 880.5 C994.9 880.5 996.1 874.9 997.4 867.9 C998.8 860.3 1000.1 820.1 1001.5 795.5 C1002.5 776.9 1003.6 738.8 1004.6 738.8 C1005.3 738.8 1006.1 738.8 1006.8 738.8 C1007.9 738.8 1008.9 687.8 1010.0 669.5 C1011.0 651.8 1012.1 629.9 1013.1 625.4 C1014.4 619.9 1015.6 616.0 1016.9 616.0 C1018.0 616.0 1019.0 617.8 1020.1 620.7 C1021.1 623.5 1022.2 654.2 1023.2 669.5 C1024.6 689.7 1025.9 709.7 1027.3 726.2 C1028.7 742.7 1030.0 757.5 1031.4 770.3 C1032.7 782.1 1033.9 795.4 1035.2 801.8 C1037.3 812.5 1039.4 818.9 1041.5 823.8 C1043.6 828.7 1045.7 833.6 1047.8 834.8 C1049.4 835.7 1050.9 836.4 1052.5 836.4 C1054.6 836.4 1056.7 833.3 1058.8 833.3 C1059.6 833.3 1060.5 836.4 1061.3 836.4 C1062.6 836.4 1063.8 826.4 1065.1 823.8 C1066.7 820.6 1068.2 818.1 1069.8 816.9 C1071.9 815.3 1074.0 813.7 1076.1 813.7 C1077.7 813.7 1079.3 819.2 1080.9 822.2 C1083.0 826.1 1085.1 832.2 1087.2 834.8 C1089.0 837.0 1090.7 839.3 1092.5 839.6 C1094.4 840.0 1096.3 839.9 1098.2 840.2 C1100.3 840.6 1102.4 844.0 1104.5 844.3 C1107.1 844.7 1109.8 844.9 1112.4 844.9 C1113.8 844.9 1115.1 842.8 1116.5 839.6 C1117.7 836.7 1119.0 812.3 1120.2 795.5 C1121.3 781.0 1122.3 747.5 1123.4 745.1 C1124.2 743.2 1125.1 741.9 1125.9 741.9 C1126.6 741.9 1127.4 744.3 1128.1 746.7 C1129.7 751.9 1131.2 792.3 1132.8 792.3 C1133.9 792.3 1134.9 788.0 1136.0 786.0 C1137.3 783.6 1138.5 779.1 1139.8 779.1 C1140.8 779.1 1141.9 781.5 1142.9 784.4 C1144.3 788.2 1145.6 816.3 1147.0 823.8 C1148.1 829.7 1149.1 836.4 1150.2 836.4 C1151.8 836.4 1153.3 836.4 1154.9 836.4 C1156.8 836.4 1158.7 841.4 1160.6 845.9 C1162.1 849.4 1163.5 860.8 1165.0 863.2 C1167.1 866.7 1169.2 869.5 1171.3 869.5 C1172.3 869.5 1173.4 854.1 1174.4 849.0 C1175.5 843.7 1176.5 842.9 1177.6 836.4 C1178.4 831.3 1179.3 817.1 1180.1 804.9 C1181.2 789.3 1182.2 760.9 1183.3 748.2 C1184.0 739.4 1184.8 727.8 1185.5 727.8 C1186.5 727.8 1187.6 728.4 1188.6 729.3 C1189.7 730.3 1190.7 744.0 1191.8 754.5 C1192.8 764.7 1193.9 795.5 1194.9 795.5 C1195.6 795.5 1196.4 759.3 1197.1 759.3 C1197.9 759.3 1198.8 786.3 1199.6 792.3 C1201.2 803.8 1202.8 805.3 1204.4 814.4 C1206.0 823.3 1207.5 844.4 1209.1 849.0 C1211.2 855.1 1213.3 857.8 1215.4 860.0 C1217.5 862.2 1219.6 864.8 1221.7 864.8 C1222.5 864.8 1223.4 861.0 1224.2 860.0 C1226.0 857.7 1227.8 858.0 1229.6 855.3 C1231.4 852.7 1233.1 842.8 1234.9 830.1 C1236.0 822.4 1237.0 802.0 1238.1 789.2 C1239.1 776.8 1240.2 753.9 1241.2 753.9 C1242.3 753.9 1243.3 755.4 1244.4 757.0 C1245.4 758.6 1246.5 767.8 1247.5 767.8 C1248.0 767.8 1248.6 663.2 1249.1 663.2 C1249.6 663.2 1250.2 729.3 1250.7 729.3 C1251.7 729.3 1252.8 719.9 1253.8 719.9 C1255.7 719.9 1257.6 725.5 1259.5 732.5 C1261.1 738.3 1262.6 763.0 1264.2 779.7 C1265.8 796.4 1267.3 822.0 1268.9 833.3 C1270.5 844.8 1272.1 853.3 1273.7 858.5 C1275.5 864.3 1277.2 871.0 1279.0 871.0 C1280.7 871.0 1282.4 866.0 1284.1 864.8 C1285.1 864.1 1286.2 863.2 1287.2 863.2 C1288.5 863.2 1289.7 871.0 1291.0 871.0 C1292.0 871.0 1293.1 866.0 1294.1 858.5 C1295.0 852.2 1295.8 791.0 1296.7 779.7 C1297.7 766.2 1298.8 766.0 1299.8 754.5 C1300.9 742.6 1301.9 709.3 1303.0 697.8 C1304.2 684.5 1305.5 677.8 1306.7 669.5 C1308.0 661.0 1309.2 646.8 1310.5 646.8 C1311.9 646.8 1313.2 672.0 1314.6 685.2 C1316.2 700.4 1317.7 716.8 1319.3 732.5 C1320.6 745.2 1321.8 756.6 1323.1 770.3 C1324.2 781.8 1325.2 798.8 1326.3 808.1 C1327.9 821.7 1329.4 833.0 1331.0 839.6 C1333.1 848.5 1335.2 858.5 1337.3 858.5 C1338.9 858.5 1340.4 857.6 1342.0 856.9 C1343.3 856.4 1344.5 854.7 1345.8 854.7 C1346.9 854.7 1347.9 855.3 1349.0 855.3 C1350.4 855.3 1351.7 838.3 1353.1 827.0 C1354.1 818.4 1355.2 804.6 1356.2 795.5 C1357.6 783.5 1358.9 771.3 1360.3 764.0 C1361.8 756.1 1363.2 746.0 1364.7 746.0 C1365.8 746.0 1366.8 747.8 1367.9 749.8 C1369.3 752.4 1370.6 768.0 1372.0 773.4 C1374.6 783.6 1377.2 787.6 1379.8 795.5 C1381.9 801.9 1384.0 811.8 1386.1 816.0 C1388.7 821.2 1391.4 824.7 1394.0 827.0 C1395.6 828.4 1397.1 829.2 1398.7 830.1 C1400.3 831.0 1401.9 831.8 1403.5 832.6 C1405.1 833.4 1406.6 834.8 1408.2 834.8 C1409.2 834.8 1410.3 828.0 1411.3 820.7 C1412.4 813.2 1413.4 781.7 1414.5 770.3 C1415.5 759.2 1416.6 749.0 1417.6 745.1 C1418.7 741.0 1419.7 740.1 1420.8 737.2 C1421.3 735.8 1421.9 735.4 1422.4 732.5 C1422.9 729.7 1423.4 681.6 1423.9 672.6 C1424.8 657.0 1425.6 650.4 1426.5 644.3 C1427.5 637.0 1428.6 635.4 1429.6 628.5 C1430.1 625.0 1430.7 614.4 1431.2 614.4 C1432.1 614.4 1433.1 625.6 1434.0 634.8 C1435.4 648.2 1436.7 679.0 1438.1 701.0 C1439.7 726.2 1441.2 757.5 1442.8 776.6 C1444.4 796.1 1446.0 815.8 1447.6 823.8 C1449.7 834.3 1451.8 840.7 1453.9 844.3 C1457.0 849.6 1460.2 854.7 1463.3 854.7 C1464.9 854.7 1466.4 852.3 1468.0 849.0 C1469.6 845.6 1471.2 825.9 1472.8 811.2 C1474.6 794.9 1476.3 775.5 1478.1 752.1 C1479.2 738.0 1480.2 717.8 1481.3 701.7 C1482.6 682.6 1483.8 646.6 1485.1 646.6 C1486.1 646.6 1487.2 646.6 1488.2 646.6 C1488.8 646.6 1489.5 669.0 1490.1 671.8 C1491.2 676.5 1492.2 675.4 1493.3 679.7 C1494.5 684.7 1495.8 707.5 1497.0 723.8 C1498.6 745.0 1500.2 779.4 1501.8 796.2 C1503.4 812.6 1504.9 824.8 1506.5 834.0 C1508.6 846.3 1510.7 856.1 1512.8 862.4 C1515.4 870.3 1518.1 874.2 1520.7 879.7 C1522.3 883.0 1523.8 889.1 1525.4 889.1 C1526.7 889.1 1527.9 881.3 1529.2 871.8 C1530.2 864.0 1531.3 833.6 1532.3 812.0 C1533.7 783.4 1535.0 748.8 1536.4 717.5 C1538.0 681.6 1539.5 618.2 1541.1 610.4 C1542.2 605.1 1543.2 605.2 1544.3 601.0 C1545.3 596.9 1546.4 582.0 1547.4 582.0 C1548.3 582.0 1549.1 584.0 1550.0 586.8 C1551.0 590.2 1552.1 625.5 1553.1 641.9 C1554.9 670.4 1556.7 690.0 1558.5 717.5 C1560.1 741.4 1561.6 780.4 1563.2 796.2 C1565.3 817.4 1567.4 830.2 1569.5 840.3 C1572.1 853.0 1574.8 862.6 1577.4 868.7 C1579.5 873.6 1581.6 879.7 1583.7 879.7 C1585.3 879.7 1586.8 868.1 1588.4 856.1 C1590.0 844.1 1591.5 811.4 1593.1 780.5 C1594.2 759.5 1595.2 718.7 1596.3 701.7 C1597.9 676.7 1599.4 657.5 1601.0 648.2 C1602.6 638.9 1604.1 636.3 1605.7 629.3 C1607.1 623.2 1608.4 608.8 1609.8 608.8 C1610.5 608.8 1611.3 609.5 1612.0 610.4 C1613.6 612.3 1615.1 643.0 1616.7 660.8 C1618.6 682.4 1620.5 708.2 1622.4 730.1 C1624.7 756.7 1627.0 789.6 1629.3 805.7 C1631.6 822.0 1634.0 833.5 1636.3 841.6 C1637.9 847.0 1639.4 851.4 1641.0 854.2 C1642.6 857.0 1644.1 860.5 1645.7 860.5 C1647.0 860.5 1648.2 854.9 1649.5 847.9 C1650.6 842.0 1651.6 819.0 1652.7 800.7 C1653.5 786.4 1654.4 757.0 1655.2 750.3 C1656.0 743.6 1656.9 744.4 1657.7 737.7 C1658.4 731.8 1659.2 709.7 1659.9 696.7 C1661.0 677.8 1662.0 663.9 1663.1 643.2 C1663.9 627.1 1664.8 598.0 1665.6 586.5 C1666.3 576.4 1667.1 564.4 1667.8 564.4 C1668.6 564.4 1669.5 564.4 1670.3 564.4 C1671.0 564.4 1671.8 577.1 1672.5 586.5 C1673.6 600.2 1674.6 631.5 1675.7 646.3 C1677.3 668.0 1678.8 676.2 1680.4 696.7 C1682.0 717.2 1683.5 758.2 1685.1 775.5 C1687.2 798.6 1689.3 816.2 1691.4 825.9 C1694.0 838.1 1696.7 846.1 1699.3 851.1 C1701.2 854.7 1703.1 859.0 1705.0 859.0 C1706.5 859.0 1707.9 851.3 1709.4 841.6 C1710.4 834.8 1711.5 811.8 1712.5 791.2 C1713.3 774.6 1714.2 743.6 1715.0 728.2 C1716.3 704.9 1717.5 693.0 1718.8 674.7 C1719.9 659.3 1720.9 639.0 1722.0 627.4 C1723.0 616.2 1724.1 602.9 1725.1 600.7 C1725.9 598.9 1726.8 599.3 1727.6 597.5 C1728.5 595.6 1729.3 580.2 1730.2 580.2 C1731.2 580.2 1732.3 619.8 1733.3 633.7 C1734.8 653.4 1736.2 663.7 1737.7 681.0 C1739.1 697.1 1740.4 717.8 1741.8 734.5 C1743.4 753.6 1744.9 778.6 1746.5 788.1 C1748.6 800.8 1750.7 806.1 1752.8 813.3 C1754.9 820.5 1757.0 831.7 1759.1 832.2 C1760.7 832.6 1762.3 832.8 1763.9 832.8 C1765.2 832.8 1766.6 823.2 1767.9 814.3 C1768.9 807.4 1770.0 789.9 1771.0 779.7 C1772.1 769.1 1773.1 765.3 1774.2 751.3 C1774.9 741.7 1775.7 715.1 1776.4 701.0 C1777.2 685.0 1778.1 660.0 1778.9 660.0 C1779.7 660.0 1780.6 670.2 1781.4 678.9 C1782.7 692.1 1783.9 733.1 1785.2 748.2 C1787.3 773.3 1789.4 789.4 1791.5 801.7 C1794.1 817.1 1796.8 828.0 1799.4 836.3 C1801.5 842.9 1803.6 847.5 1805.7 852.1 C1807.3 855.6 1808.8 859.5 1810.4 861.5 C1812.5 864.2 1814.6 865.9 1816.7 867.2 C1818.3 868.2 1819.9 869.4 1821.5 869.4 C1823.1 869.4 1824.6 861.6 1826.2 852.1 C1827.5 844.5 1828.7 813.8 1830.0 795.4 C1831.0 780.4 1832.1 761.4 1833.1 751.3 C1833.9 743.2 1834.8 740.0 1835.6 732.4 C1836.5 724.5 1837.3 702.5 1838.2 702.5 C1838.9 702.5 1839.7 726.1 1840.4 726.1 C1841.1 726.1 1841.9 719.2 1842.6 719.2 C1843.6 719.2 1844.7 724.6 1845.7 729.3 C1847.6 738.0 1849.5 762.3 1851.4 779.7 C1853.5 798.9 1855.6 828.1 1857.7 839.5 C1860.9 856.7 1864.0 863.7 1867.2 874.1 C1869.3 881.0 1871.4 888.5 1873.5 893.0 C1875.1 896.3 1876.6 900.9 1878.2 900.9 C1879.6 900.9 1880.9 895.0 1882.3 886.7 C1883.3 880.4 1884.4 848.8 1885.4 826.9 C1886.5 804.3 1887.5 776.4 1888.6 751.3 C1889.6 727.0 1890.7 703.0 1891.7 678.9" transform="translate(1.5 1.5)" fill="none" stroke="rgba(0,0,0,0.1)" stroke-width="3" stroke-linejoin="round"/>
<path d="M119.7 638.3 C120.4 634.6 121.2 631.8 121.9 627.2 C123.0 620.5 124.0 598.9 125.1 598.9 C125.7 598.9 126.4 621.0 127.0 621.0 C127.7 621.0 128.5 609.0 129.2 609.0 C130.2 609.0 131.3 611.5 132.3 614.6 C133.4 617.8 134.4 631.0 135.5 643.0 C136.5 654.6 137.6 672.3 138.6 690.0 C139.7 708.3 140.7 738.5 141.8 753.0 C143.4 774.4 144.9 797.2 146.5 800.5 C147.5 802.6 148.6 803.9 149.6 804.3 C150.9 804.8 152.1 804.7 153.4 805.2 C155.3 806.0 157.2 823.8 159.1 828.8 C161.0 833.8 162.9 839.8 164.8 839.8 C166.3 839.8 167.7 839.8 169.2 839.8 C170.2 839.8 171.3 832.6 172.3 828.8 C173.7 823.8 175.0 821.4 176.4 813.0 C177.5 806.4 178.5 786.6 179.6 769.0 C180.3 756.9 181.1 737.4 181.8 724.9 C182.4 714.1 183.1 696.5 183.7 696.5 C184.5 696.5 185.4 710.7 186.2 710.7 C187.1 710.7 188.1 672.9 189.0 672.9 C190.1 672.9 191.1 676.2 192.2 680.8 C193.2 685.2 194.3 713.7 195.3 731.2 C196.4 749.3 197.4 771.8 198.5 787.9 C199.9 808.6 201.2 834.6 202.6 841.4 C204.4 850.2 206.1 853.7 207.9 857.2 C210.0 861.4 212.1 866.3 214.2 866.6 C217.4 867.0 220.5 866.8 223.7 867.2 C224.7 867.3 225.8 868.2 226.8 868.2 C228.4 868.2 229.9 841.8 231.5 832.0 C233.1 822.0 234.7 818.9 236.3 806.8 C237.3 799.0 238.4 785.8 239.4 769.0 C240.5 751.6 241.5 705.5 242.6 690.2 C244.2 667.8 245.7 644.6 247.3 644.6 C248.3 644.6 249.4 648.3 250.4 652.4 C252.0 658.7 253.6 683.0 255.2 706.0 C256.8 728.5 258.3 776.9 259.9 800.5 C261.5 824.1 263.0 848.0 264.6 857.2 C268.0 877.0 271.3 883.8 274.7 893.1 C276.3 897.4 277.8 901.2 279.4 904.1 C281.0 907.1 282.6 911.4 284.2 911.4 C285.2 911.4 286.3 906.2 287.3 899.4 C288.4 892.4 289.4 851.3 290.5 827.0 C291.9 795.8 293.2 759.2 294.6 732.5 C295.8 708.4 297.1 689.0 298.3 669.5 C299.4 652.6 300.4 632.4 301.5 622.2 C302.5 612.3 303.6 600.2 304.6 600.2 C305.7 600.2 306.7 601.4 307.8 603.3 C308.8 605.1 309.9 620.3 310.9 631.7 C312.5 649.4 314.1 674.1 315.7 701.0 C317.3 727.3 318.8 778.0 320.4 795.5 C322.5 818.9 324.6 831.6 326.7 842.7 C329.3 856.6 332.0 864.8 334.6 874.2 C336.7 881.7 338.8 891.7 340.9 894.7 C341.9 896.2 343.0 897.8 344.0 897.8 C345.1 897.8 346.1 890.2 347.2 880.5 C348.2 871.1 349.3 821.2 350.3 795.5 C351.4 769.0 352.4 737.4 353.5 723.0 C354.5 709.0 355.6 693.1 356.6 693.1 C357.3 693.1 358.1 705.7 358.8 705.7 C360.5 705.7 362.2 686.8 363.9 686.8 C364.6 686.8 365.4 716.7 366.1 716.7 C367.7 716.7 369.2 716.7 370.8 716.7 C371.8 716.7 372.9 719.6 373.9 723.0 C375.5 728.3 377.1 765.5 378.7 779.7 C380.8 798.4 382.9 815.0 385.0 823.8 C387.1 832.6 389.2 841.5 391.3 842.7 C392.9 843.6 394.4 843.8 396.0 844.3 C397.6 844.8 399.1 845.9 400.7 845.9 C402.1 845.9 403.4 840.4 404.8 833.3 C405.9 827.8 406.9 789.6 408.0 787.6 C409.0 785.6 410.1 786.1 411.1 784.4 C412.6 782.0 414.0 760.8 415.5 760.8 C416.1 760.8 416.8 765.6 417.4 765.6 C418.5 765.6 419.5 759.3 420.6 759.3 C421.8 759.3 423.1 773.8 424.3 779.7 C425.6 785.7 426.8 790.4 428.1 795.5 C429.7 802.0 431.3 807.6 432.9 814.4 C434.5 821.1 436.0 832.5 437.6 836.4 C439.2 840.3 440.7 843.1 442.3 844.3 C444.4 845.9 446.5 847.4 448.6 847.4 C453.3 847.4 458.1 847.4 462.8 847.4 C464.4 847.4 465.9 838.3 467.5 833.3 C469.1 828.3 470.6 824.9 472.2 817.5 C473.8 810.0 475.4 789.7 477.0 779.7 C478.0 773.3 479.1 765.6 480.1 763.3 C481.7 759.8 483.2 757.0 484.8 757.0 C485.9 757.0 486.9 769.0 488.0 773.4 C489.6 779.8 491.1 780.7 492.7 789.2 C493.8 795.0 494.8 819.7 495.9 827.0 C498.0 841.4 500.1 848.3 502.2 855.3 C504.8 864.0 507.4 872.6 510.0 875.8 C511.6 877.8 513.2 878.2 514.8 879.9 C516.4 881.5 517.9 886.2 519.5 886.2 C520.5 886.2 521.6 881.1 522.6 877.4 C523.9 872.9 525.1 869.5 526.4 858.5 C527.2 851.2 528.1 815.0 528.9 795.5 C530.0 770.6 531.0 750.5 532.1 726.2 C532.9 707.2 533.8 676.4 534.6 666.3 C535.7 653.4 536.7 648.7 537.8 641.1 C539.0 632.3 540.3 616.9 541.5 616.9 C542.6 616.9 543.6 618.4 544.7 620.7 C545.7 623.0 546.8 648.7 547.8 663.2 C549.4 685.7 551.0 706.5 552.6 732.5 C553.6 749.3 554.7 778.0 555.7 789.2 C557.3 806.1 558.8 814.9 560.4 823.8 C562.5 835.7 564.6 844.7 566.7 852.2 C568.8 859.7 570.9 865.0 573.0 871.0 C574.9 876.5 576.8 886.8 578.7 886.8 C579.8 886.8 580.8 886.8 581.9 886.8 C582.3 886.8 582.7 877.5 583.1 871.0 C584.4 850.5 585.6 806.8 586.9 779.7 C588.3 750.5 589.6 725.6 591.0 701.0 C592.4 676.4 593.7 646.2 595.1 631.7 C596.2 620.4 597.2 612.3 598.3 606.5 C599.0 602.5 599.8 597.0 600.5 597.0 C601.5 597.0 602.6 601.5 603.6 606.5 C604.7 611.7 605.7 629.1 606.8 644.3 C608.4 666.7 609.9 705.0 611.5 732.5 C612.8 754.8 614.0 784.5 615.3 795.5 C617.2 811.7 619.0 819.7 620.9 827.0 C623.0 835.3 625.1 839.1 627.2 845.9 C629.3 852.7 631.4 862.9 633.5 867.9 C635.1 871.7 636.7 876.7 638.3 876.7 C639.7 876.7 641.0 870.0 642.4 861.6 C643.6 854.0 644.9 818.6 646.1 795.5 C647.2 775.5 648.2 754.8 649.3 732.5 C650.3 710.9 651.4 681.6 652.4 663.2 C653.5 644.2 654.5 623.2 655.6 616.0 C656.3 611.0 657.1 605.9 657.8 605.9 C658.6 605.9 659.5 607.6 660.3 609.6 C661.9 613.3 663.4 637.7 665.0 653.7 C666.6 670.0 668.2 686.6 669.8 707.3 C671.4 727.6 672.9 762.3 674.5 779.7 C676.6 803.0 678.7 822.9 680.8 833.3 C682.9 843.7 685.0 849.2 687.1 855.3 C689.2 861.4 691.3 866.8 693.4 871.0 C695.0 874.1 696.5 879.0 698.1 879.0 C699.2 879.0 700.2 872.0 701.3 864.8 C703.1 852.8 704.8 807.4 706.6 770.1 C707.9 742.6 709.2 698.5 710.5 671.5 C711.9 641.7 713.4 611.2 714.8 595.9 C716.2 580.6 717.7 563.0 719.1 563.0 C720.2 563.0 721.2 567.5 722.3 572.9 C723.6 579.6 725.0 613.4 726.3 635.3 C727.9 662.2 729.6 694.1 731.2 720.8 C732.8 747.5 734.5 780.4 736.1 796.4 C738.3 817.9 740.5 831.8 742.7 842.4 C745.4 855.6 748.2 865.6 750.9 872.0 C752.8 876.3 754.6 881.9 756.5 881.9 C757.6 881.9 758.7 880.6 759.8 878.6 C761.2 876.0 762.7 831.8 764.1 803.0 C765.5 774.8 766.9 739.1 768.3 704.4 C769.6 671.3 771.0 619.8 772.3 599.2 C773.6 579.1 774.9 563.1 776.2 556.4 C776.9 553.0 777.5 549.2 778.2 549.2 C779.3 549.2 780.4 552.2 781.5 556.4 C782.6 560.6 783.7 588.9 784.8 605.7 C786.3 629.2 787.9 650.8 789.4 678.1 C790.8 703.0 792.2 746.2 793.6 763.5 C795.8 790.6 798.0 807.3 800.2 819.4 C802.9 834.5 805.7 844.7 808.4 852.3 C811.1 859.9 813.9 869.7 816.6 869.7 C817.4 869.7 818.1 867.8 818.9 865.4 C820.3 860.9 821.8 815.9 823.2 786.5 C824.8 752.9 826.5 697.6 828.1 671.5 C829.7 645.4 831.4 620.9 833.0 612.3 C834.4 604.7 835.9 597.5 837.3 597.5 C838.4 597.5 839.5 599.9 840.6 604.1 C841.4 607.0 842.1 645.4 842.9 651.8 C844.0 661.0 845.1 660.4 846.2 668.2 C847.8 679.8 849.5 714.7 851.1 737.2 C852.7 759.7 854.4 788.9 856.0 803.0 C857.2 813.6 858.5 820.8 859.7 827.0 C861.3 834.9 862.8 842.3 864.4 845.9 C865.7 848.8 866.9 852.2 868.2 852.2 C869.6 852.2 870.9 848.6 872.3 847.4 C873.9 846.1 875.4 846.1 877.0 844.3 C878.6 842.4 880.2 833.6 881.8 820.7 C882.8 812.3 883.9 785.7 884.9 764.0 C886.0 741.6 887.0 703.6 888.1 685.2 C889.5 661.6 890.8 645.9 892.2 631.7 C893.4 618.9 894.7 599.6 895.9 599.6 C897.0 599.6 898.0 613.7 899.1 622.2 C900.7 634.7 902.2 647.2 903.8 666.3 C905.4 685.4 906.9 724.7 908.5 748.2 C910.1 772.2 911.7 798.8 913.3 811.2 C915.9 831.4 918.5 841.1 921.1 852.2 C923.7 863.4 926.4 873.8 929.0 880.5 C930.8 885.1 932.6 891.5 934.4 891.5 C935.4 891.5 936.5 891.0 937.5 890.0 C938.3 889.2 939.2 860.4 940.0 842.7 C941.3 815.7 942.5 778.0 943.8 748.2 C945.2 716.1 946.5 675.8 947.9 656.9 C949.3 638.0 950.6 622.0 952.0 615.9 C953.1 611.2 954.1 606.5 955.2 606.5 C956.2 606.5 957.3 610.1 958.3 614.4 C959.6 619.7 960.8 648.9 962.1 663.2 C963.7 680.9 965.2 691.7 966.8 710.4 C968.4 729.1 969.9 763.2 971.5 779.7 C973.6 801.8 975.7 818.7 977.8 830.1 C981.0 847.3 984.1 859.7 987.3 867.9 C989.4 873.4 991.5 880.5 993.6 880.5 C994.9 880.5 996.1 874.9 997.4 867.9 C998.8 860.3 1000.1 820.1 1001.5 795.5 C1002.5 776.9 1003.6 738.8 1004.6 738.8 C1005.3 738.8 1006.1 738.8 1006.8 738.8 C1007.9 738.8 1008.9 687.8 1010.0 669.5 C1011.0 651.8 1012.1 629.9 1013.1 625.4 C1014.4 619.9 1015.6 616.0 1016.9 616.0 C1018.0 616.0 1019.0 617.8 1020.1 620.7 C1021.1 623.5 1022.2 654.2 1023.2 669.5 C1024.6 689.7 1025.9 709.7 1027.3 726.2 C1028.7 742.7 1030.0 757.5 1031.4 770.3 C1032.7 782.1 1033.9 795.4 1035.2 801.8 C1037.3 812.5 1039.4 818.9 1041.5 823.8 C1043.6 828.7 1045.7 833.6 1047.8 834.8 C1049.4 835.7 1050.9 836.4 1052.5 836.4 C1054.6 836.4 1056.7 833.3 1058.8 833.3 C1059.6 833.3 1060.5 836.4 1061.3 836.4 C1062.6 836.4 1063.8 826.4 1065.1 823.8 C1066.7 820.6 1068.2 818.1 1069.8 816.9 C1071.9 815.3 1074.0 813.7 1076.1 813.7 C1077.7 813.7 1079.3 819.2 1080.9 822.2 C1083.0 826.1 1085.1 832.2 1087.2 834.8 C1089.0 837.0 1090.7 839.3 1092.5 839.6 C1094.4 840.0 1096.3 839.9 1098.2 840.2 C1100.3 840.6 1102.4 844.0 1104.5 844.3 C1107.1 844.7 1109.8 844.9 1112.4 844.9 C1113.8 844.9 1115.1 842.8 1116.5 839.6 C1117.7 836.7 1119.0 812.3 1120.2 795.5 C1121.3 781.0 1122.3 747.5 1123.4 745.1 C1124.2 743.2 1125.1 741.9 1125.9 741.9 C1126.6 741.9 1127.4 744.3 1128.1 746.7 C1129.7 751.9 1131.2 792.3 1132.8 792.3 C1133.9 792.3 1134.9 788.0 1136.0 786.0 C1137.3 783.6 1138.5 779.1 1139.8 779.1 C1140.8 779.1 1141.9 781.5 1142.9 784.4 C1144.3 788.2 1145.6 816.3 1147.0 823.8 C1148.1 829.7 1149.1 836.4 1150.2 836.4 C1151.8 836.4 1153.3 836.4 1154.9 836.4 C1156.8 836.4 1158.7 841.4 1160.6 845.9 C1162.1 849.4 1163.5 860.8 1165.0 863.2 C1167.1 866.7 1169.2 869.5 1171.3 869.5 C1172.3 869.5 1173.4 854.1 1174.4 849.0 C1175.5 843.7 1176.5 842.9 1177.6 836.4 C1178.4 831.3 1179.3 817.1 1180.1 804.9 C1181.2 789.3 1182.2 760.9 1183.3 748.2 C1184.0 739.4 1184.8 727.8 1185.5 727.8 C1186.5 727.8 1187.6 728.4 1188.6 729.3 C1189.7 730.3 1190.7 744.0 1191.8 754.5 C1192.8 764.7 1193.9 795.5 1194.9 795.5 C1195.6 795.5 1196.4 759.3 1197.1 759.3 C1197.9 759.3 1198.8 786.3 1199.6 792.3 C1201.2 803.8 1202.8 805.3 1204.4 814.4 C1206.0 823.3 1207.5 844.4 1209.1 849.0 C1211.2 855.1 1213.3 857.8 1215.4 860.0 C1217.5 862.2 1219.6 864.8 1221.7 864.8 C1222.5 864.8 1223.4 861.0 1224.2 860.0 C1226.0 857.7 1227.8 858.0 1229.6 855.3 C1231.4 852.7 1233.1 842.8 1234.9 830.1 C1236.0 822.4 1237.0 802.0 1238.1 789.2 C1239.1 776.8 1240.2 753.9 1241.2 753.9 C1242.3 753.9 1243.3 755.4 1244.4 757.0 C1245.4 758.6 1246.5 767.8 1247.5 767.8 C1248.0 767.8 1248.6 663.2 1249.1 663.2 C1249.6 663.2 1250.2 729.3 1250.7 729.3 C1251.7 729.3 1252.8 719.9 1253.8 719.9 C1255.7 719.9 1257.6 725.5 1259.5 732.5 C1261.1 738.3 1262.6 763.0 1264.2 779.7 C1265.8 796.4 1267.3 822.0 1268.9 833.3 C1270.5 844.8 1272.1 853.3 1273.7 858.5 C1275.5 864.3 1277.2 871.0 1279.0 871.0 C1280.7 871.0 1282.4 866.0 1284.1 864.8 C1285.1 864.1 1286.2 863.2 1287.2 863.2 C1288.5 863.2 1289.7 871.0 1291.0 871.0 C1292.0 871.0 1293.1 866.0 1294.1 858.5 C1295.0 852.2 1295.8 791.0 1296.7 779.7 C1297.7 766.2 1298.8 766.0 1299.8 754.5 C1300.9 742.6 1301.9 709.3 1303.0 697.8 C1304.2 684.5 1305.5 677.8 1306.7 669.5 C1308.0 661.0 1309.2 646.8 1310.5 646.8 C1311.9 646.8 1313.2 672.0 1314.6 685.2 C1316.2 700.4 1317.7 716.8 1319.3 732.5 C1320.6 745.2 1321.8 756.6 1323.1 770.3 C1324.2 781.8 1325.2 798.8 1326.3 808.1 C1327.9 821.7 1329.4 833.0 1331.0 839.6 C1333.1 848.5 1335.2 858.5 1337.3 858.5 C1338.9 858.5 1340.4 857.6 1342.0 856.9 C1343.3 856.4 1344.5 854.7 1345.8 854.7 C1346.9 854.7 1347.9 855.3 1349.0 855.3 C1350.4 855.3 1351.7 838.3 1353.1 827.0 C1354.1 818.4 1355.2 804.6 1356.2 795.5 C1357.6 783.5 1358.9 771.3 1360.3 764.0 C1361.8 756.1 1363.2 746.0 1364.7 746.0 C1365.8 746.0 1366.8 747.8 1367.9 749.8 C1369.3 752.4 1370.6 768.0 1372.0 773.4 C1374.6 783.6 1377.2 787.6 1379.8 795.5 C1381.9 801.9 1384.0 811.8 1386.1 816.0 C1388.7 821.2 1391.4 824.7 1394.0 827.0 C1395.6 828.4 1397.1 829.2 1398.7 830.1 C1400.3 831.0 1401.9 831.8 1403.5 832.6 C1405.1 833.4 1406.6 834.8 1408.2 834.8 C1409.2 834.8 1410.3 828.0 1411.3 820.7 C1412.4 813.2 1413.4 781.7 1414.5 770.3 C1415.5 759.2 1416.6 749.0 1417.6 745.1 C1418.7 741.0 1419.7 740.1 1420.8 737.2 C1421.3 735.8 1421.9 735.4 1422.4 732.5 C1422.9 729.7 1423.4 681.6 1423.9 672.6 C1424.8 657.0 1425.6 650.4 1426.5 644.3 C1427.5 637.0 1428.6 635.4 1429.6 628.5 C1430.1 625.0 1430.7 614.4 1431.2 614.4 C1432.1 614.4 1433.1 625.6 1434.0 634.8 C1435.4 648.2 1436.7 679.0 1438.1 701.0 C1439.7 726.2 1441.2 757.5 1442.8 776.6 C1444.4 796.1 1446.0 815.8 1447.6 823.8 C1449.7 834.3 1451.8 840.7 1453.9 844.3 C1457.0 849.6 1460.2 854.7 1463.3 854.7 C1464.9 854.7 1466.4 852.3 1468.0 849.0 C1469.6 845.6 1471.2 825.9 1472.8 811.2 C1474.6 794.9 1476.3 775.5 1478.1 752.1 C1479.2 738.0 1480.2 717.8 1481.3 701.7 C1482.6 682.6 1483.8 646.6 1485.1 646.6 C1486.1 646.6 1487.2 646.6 1488.2 646.6 C1488.8 646.6 1489.5 669.0 1490.1 671.8 C1491.2 676.5 1492.2 675.4 1493.3 679.7 C1494.5 684.7 1495.8 707.5 1497.0 723.8 C1498.6 745.0 1500.2 779.4 1501.8 796.2 C1503.4 812.6 1504.9 824.8 1506.5 834.0 C1508.6 846.3 1510.7 856.1 1512.8 862.4 C1515.4 870.3 1518.1 874.2 1520.7 879.7 C1522.3 883.0 1523.8 889.1 1525.4 889.1 C1526.7 889.1 1527.9 881.3 1529.2 871.8 C1530.2 864.0 1531.3 833.6 1532.3 812.0 C1533.7 783.4 1535.0 748.8 1536.4 717.5 C1538.0 681.6 1539.5 618.2 1541.1 610.4 C1542.2 605.1 1543.2 605.2 1544.3 601.0 C1545.3 596.9 1546.4 582.0 1547.4 582.0 C1548.3 582.0 1549.1 584.0 1550.0 586.8 C1551.0 590.2 1552.1 625.5 1553.1 641.9 C1554.9 670.4 1556.7 690.0 1558.5 717.5 C1560.1 741.4 1561.6 780.4 1563.2 796.2 C1565.3 817.4 1567.4 830.2 1569.5 840.3 C1572.1 853.0 1574.8 862.6 1577.4 868.7 C1579.5 873.6 1581.6 879.7 1583.7 879.7 C1585.3 879.7 1586.8 868.1 1588.4 856.1 C1590.0 844.1 1591.5 811.4 1593.1 780.5 C1594.2 759.5 1595.2 718.7 1596.3 701.7 C1597.9 676.7 1599.4 657.5 1601.0 648.2 C1602.6 638.9 1604.1 636.3 1605.7 629.3 C1607.1 623.2 1608.4 608.8 1609.8 608.8 C1610.5 608.8 1611.3 609.5 1612.0 610.4 C1613.6 612.3 1615.1 643.0 1616.7 660.8 C1618.6 682.4 1620.5 708.2 1622.4 730.1 C1624.7 756.7 1627.0 789.6 1629.3 805.7 C1631.6 822.0 1634.0 833.5 1636.3 841.6 C1637.9 847.0 1639.4 851.4 1641.0 854.2 C1642.6 857.0 1644.1 860.5 1645.7 860.5 C1647.0 860.5 1648.2 854.9 1649.5 847.9 C1650.6 842.0 1651.6 819.0 1652.7 800.7 C1653.5 786.4 1654.4 757.0 1655.2 750.3 C1656.0 743.6 1656.9 744.4 1657.7 737.7 C1658.4 731.8 1659.2 709.7 1659.9 696.7 C1661.0 677.8 1662.0 663.9 1663.1 643.2 C1663.9 627.1 1664.8 598.0 1665.6 586.5 C1666.3 576.4 1667.1 564.4 1667.8 564.4 C1668.6 564.4 1669.5 564.4 1670.3 564.4 C1671.0 564.4 1671.8 577.1 1672.5 586.5 C1673.6 600.2 1674.6 631.5 1675.7 646.3 C1677.3 668.0 1678.8 676.2 1680.4 696.7 C1682.0 717.2 1683.5 758.2 1685.1 775.5 C1687.2 798.6 1689.3 816.2 1691.4 825.9 C1694.0 838.1 1696.7 846.1 1699.3 851.1 C1701.2 854.7 1703.1 859.0 1705.0 859.0 C1706.5 859.0 1707.9 851.3 1709.4 841.6 C1710.4 834.8 1711.5 811.8 1712.5 791.2 C1713.3 774.6 1714.2 743.6 1715.0 728.2 C1716.3 704.9 1717.5 693.0 1718.8 674.7 C1719.9 659.3 1720.9 639.0 1722.0 627.4 C1723.0 616.2 1724.1 602.9 1725.1 600.7 C1725.9 598.9 1726.8 599.3 1727.6 597.5 C1728.5 595.6 1729.3 580.2 1730.2 580.2 C1731.2 580.2 1732.3 619.8 1733.3 633.7 C1734.8 653.4 1736.2 663.7 1737.7 681.0 C1739.1 697.1 1740.4 717.8 1741.8 734.5 C1743.4 753.6 1744.9 778.6 1746.5 788.1 C1748.6 800.8 1750.7 806.1 1752.8 813.3 C1754.9 820.5 1757.0 831.7 1759.1 832.2 C1760.7 832.6 1762.3 832.8 1763.9 832.8 C1765.2 832.8 1766.6 823.2 1767.9 814.3 C1768.9 807.4 1770.0 789.9 1771.0 779.7 C1772.1 769.1 1773.1 765.3 1774.2 751.3 C1774.9 741.7 1775.7 715.1 1776.4 701.0 C1777.2 685.0 1778.1 660.0 1778.9 660.0 C1779.7 660.0 1780.6 670.2 1781.4 678.9 C1782.7 692.1 1783.9 733.1 1785.2 748.2 C1787.3 773.3 1789.4 789.4 1791.5 801.7 C1794.1 817.1 1796.8 828.0 1799.4 836.3 C1801.5 842.9 1803.6 847.5 1805.7 852.1 C1807.3 855.6 1808.8 859.5 1810.4 861.5 C1812.5 864.2 1814.6 865.9 1816.7 867.2 C1818.3 868.2 1819.9 869.4 1821.5 869.4 C1823.1 869.4 1824.6 861.6 1826.2 852.1 C1827.5 844.5 1828.7 813.8 1830.0 795.4 C1831.0 780.4 1832.1 761.4 1833.1 751.3 C1833.9 743.2 1834.8 740.0 1835.6 732.4 C1836.5 724.5 1837.3 702.5 1838.2 702.5 C1838.9 702.5 1839.7 726.1 1840.4 726.1 C1841.1 726.1 1841.9 719.2 1842.6 719.2 C1843.6 719.2 1844.7 724.6 1845.7 729.3 C1847.6 738.0 1849.5 762.3 1851.4 779.7 C1853.5 798.9 1855.6 828.1 1857.7 839.5 C1860.9 856.7 1864.0 863.7 1867.2 874.1 C1869.3 881.0 1871.4 888.5 1873.5 893.0 C1875.1 896.3 1876.6 900.9 1878.2 900.9 C1879.6 900.9 1880.9 895.0 1882.3 886.7 C1883.3 880.4 1884.4 848.8 1885.4 826.9 C1886.5 804.3 1887.5 776.4 1888.6 751.3 C1889.6 727.0 1890.7 703.0 1891.7 678.9" fill="none" stroke="#4f0c78" stroke-width="2.5" stroke-linejoin="round"/>
</g>
</svg>
</body></html>
